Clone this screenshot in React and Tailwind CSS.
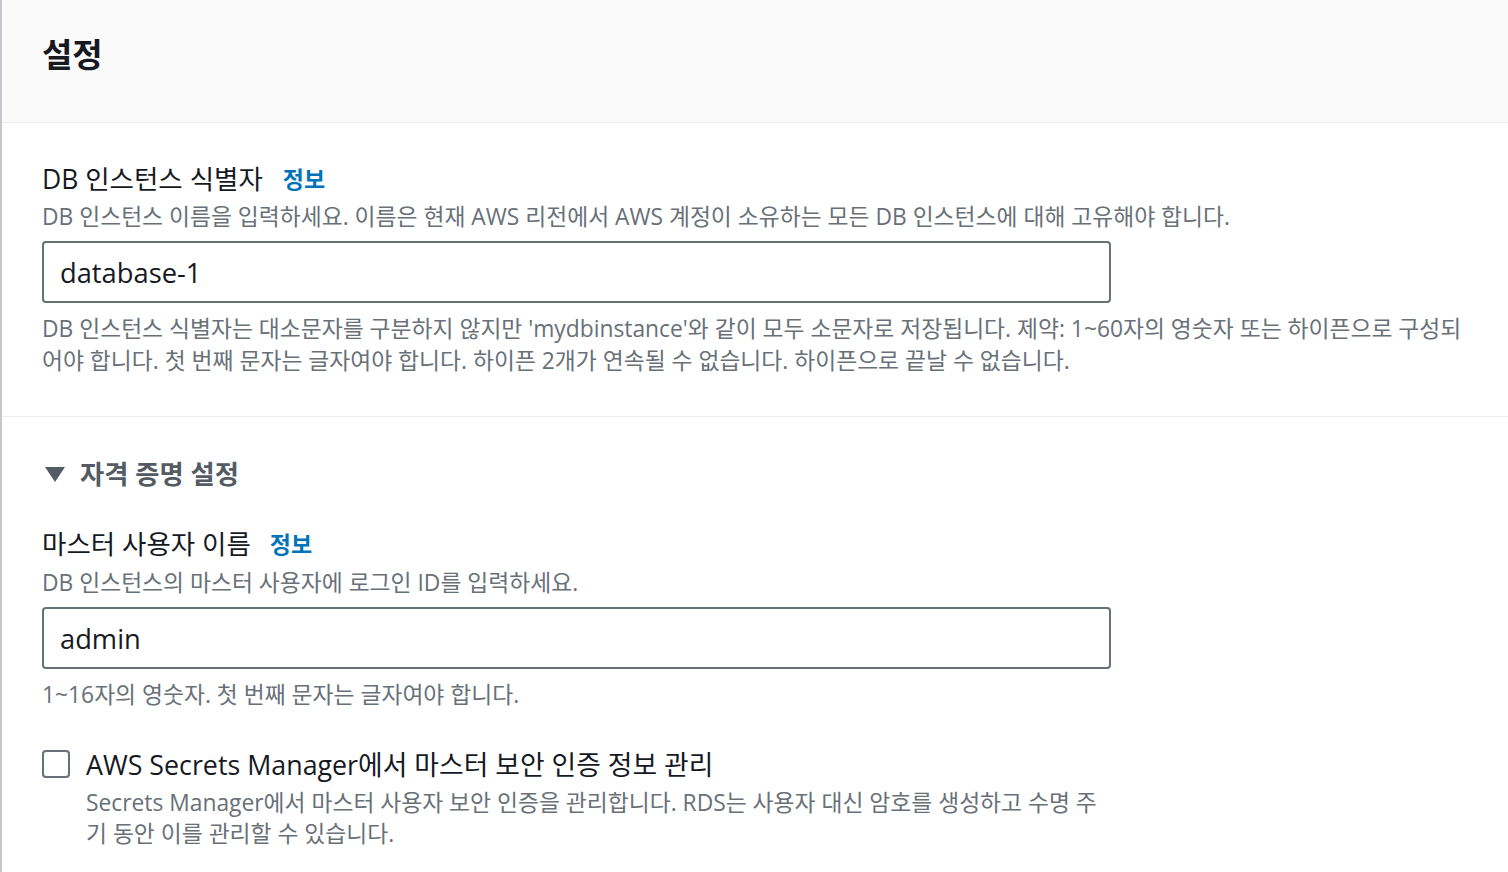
import React from "react";

const FONT = { fontFamily: '"Open Sans", "Noto Sans CJK KR", sans-serif' };

function Info() {
  return <span className="text-[23px] font-bold text-[#0073bb]">정보</span>;
}

export default function App() {
  return (
    <div className="min-h-[872px] w-[1508px] bg-white border-l-2 border-[#c6c6cd] text-[#16191f]" style={FONT}>
      <div className="h-[123px] bg-[#fafafa] border-b border-[#eaeded] pl-[40px] pt-[33px]">
        <h2 className="text-[33px] font-bold leading-[44px] text-[#16191f]">설정</h2>
      </div>

      <div className="border-b border-[#eaeded] pl-[40px] pr-[40px] pt-[38px] pb-[39px]">
        <div className="flex items-center gap-[20px] leading-[36px]">
          <span className="text-[26.5px]">DB 인스턴스 식별자</span>
          <Info />
        </div>
        <p className="mt-[4px] text-[22.8px] leading-[32px] text-[#687078]">
          DB 인스턴스 이름을 입력하세요. 이름은 현재 AWS 리전에서 AWS 계정이 소유하는 모든 DB 인스턴스에 대해 고유해야 합니다.
        </p>
        <div className="mt-[8px] flex h-[62px] w-[1069px] items-center rounded-[4px] border-2 border-[#687078] px-[16px] pt-[2px] text-[27.3px]">
          database-1
        </div>
        <p className="mt-[10px] text-[22.8px] leading-[32px] text-[#687078]">
          DB 인스턴스 식별자는 대소문자를 구분하지 않지만 'mydbinstance'와 같이 모두 소문자로 저장됩니다. 제약: 1~60자의 영숫자 또는 하이픈으로 구성되어야 합니다. 첫 번째 문자는 글자여야 합니다. 하이픈 2개가 연속될 수 없습니다. 하이픈으로 끝날 수 없습니다.
        </p>
      </div>

      <div className="pl-[40px] pr-[40px] pt-[39px] pb-[20px]">
        <div className="flex items-center gap-[14px] leading-[36px]">
          <svg width="22" height="18" viewBox="0 0 22 18" className="ml-[2px]">
            <polygon points="1,2 21,2 11,17" fill="#545b64" />
          </svg>
          <span className="text-[26.3px] font-bold text-[#545b64]">자격 증명 설정</span>
        </div>

        <div className="mt-[34px] flex items-center gap-[19px] leading-[36px]">
          <span className="text-[26.5px]">마스터 사용자 이름</span>
          <Info />
        </div>
        <p className="mt-[5px] text-[22.8px] leading-[32px] text-[#687078]">
          DB 인스턴스의 마스터 사용자에 로그인 ID를 입력하세요.
        </p>
        <div className="mt-[8px] flex h-[62px] w-[1069px] items-center rounded-[4px] border-2 border-[#687078] px-[16px] pt-[2px] text-[27.3px]">
          admin
        </div>
        <p className="mt-[10px] text-[22.8px] leading-[32px] text-[#687078]">
          1~16자의 영숫자. 첫 번째 문자는 글자여야 합니다.
        </p>

        <div className="mt-[36px] flex gap-[16px]">
          <div className="mt-[3px] h-[28px] w-[28px] shrink-0 rounded-[4px] border-2 border-[#687078] bg-white"></div>
          <div className="w-[1025px]">
            <div className="text-[26.8px] leading-[36px]">AWS Secrets Manager에서 마스터 보안 인증 정보 관리</div>
            <p className="mt-[4px] text-[22.8px] leading-[31px] text-[#687078]">
              Secrets Manager에서 마스터 사용자 보안 인증을 관리합니다. RDS는 사용자 대신 암호를 생성하고 수명 주기 동안 이를 관리할 수 있습니다.
            </p>
          </div>
        </div>
      </div>
    </div>
  );
}
